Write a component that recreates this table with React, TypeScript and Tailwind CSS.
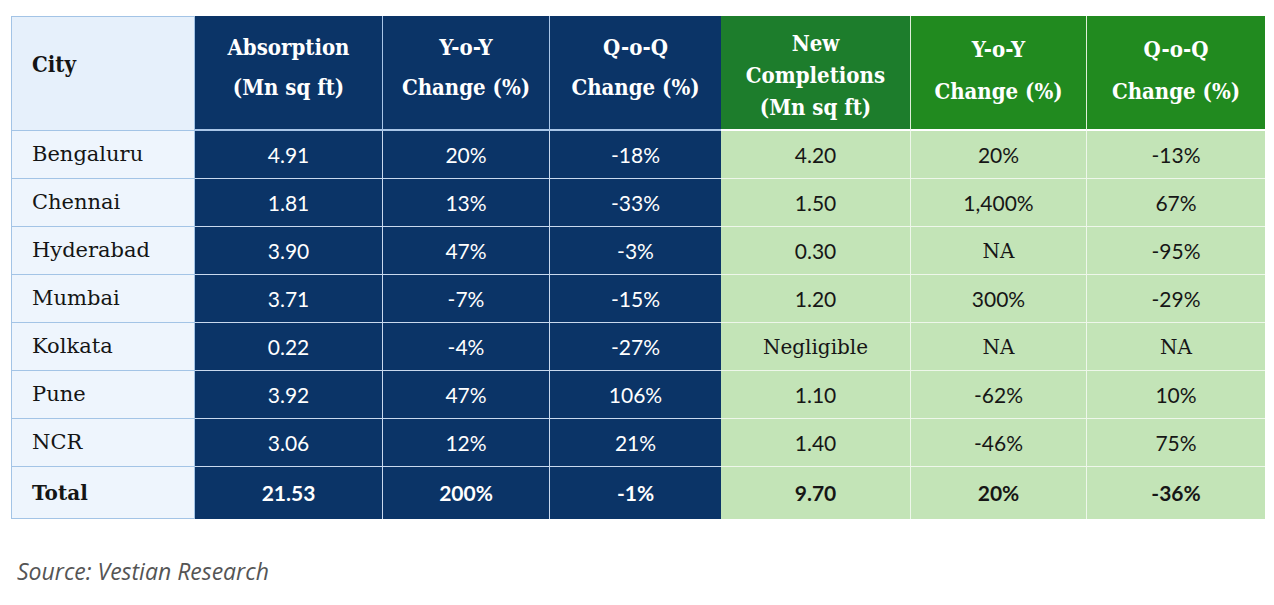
import React from "react";

type Row = { city: string; a: string[]; g: string[]; total?: boolean };

const rows: Row[] = [
  { city: "Bengaluru", a: ["4.91", "20%", "-18%"], g: ["4.20", "20%", "-13%"] },
  { city: "Chennai", a: ["1.81", "13%", "-33%"], g: ["1.50", "1,400%", "67%"] },
  { city: "Hyderabad", a: ["3.90", "47%", "-3%"], g: ["0.30", "NA", "-95%"] },
  { city: "Mumbai", a: ["3.71", "-7%", "-15%"], g: ["1.20", "300%", "-29%"] },
  { city: "Kolkata", a: ["0.22", "-4%", "-27%"], g: ["Negligible", "NA", "NA"] },
  { city: "Pune", a: ["3.92", "47%", "106%"], g: ["1.10", "-62%", "10%"] },
  { city: "NCR", a: ["3.06", "12%", "21%"], g: ["1.40", "-46%", "75%"] },
  { city: "Total", a: ["21.53", "200%", "-1%"], g: ["9.70", "20%", "-36%"], total: true },
];

const isWord = (v: string) => v === "NA" || v === "Negligible";

const headFont =
  "font-['DejaVu_Serif_Condensed','DejaVu_Serif',serif] font-stretch-condensed font-bold text-white text-[22px]";

export default function App() {
  return (
    <div className="w-[1274px] h-[605px] bg-white pl-[11px] pt-[16px]">
      <div className="grid grid-cols-[184px_188px_167px_171px_190px_176px_178px] w-[1254px]">
        {/* header */}
        <div className="h-[115px] bg-[#e6f0fb] border border-[#a3c4e6] flex items-center pl-[20px] pb-[18px] text-[22px] font-bold text-[#141414] font-['DejaVu_Serif_Condensed','DejaVu_Serif',serif] font-stretch-condensed">
          City
        </div>
        {["Absorption|(Mn sq ft)", "Y-o-Y|Change (%)", "Q-o-Q|Change (%)"].map((h, i) => (
          <div
            key={h}
            className={`h-[115px] bg-[#0b3467] border-b-[2px] border-b-[#a9c6e8] ${i < 2 ? "border-r border-r-[#a9c6e8]" : ""} flex flex-col items-center justify-center pb-[12px] leading-[40px] ${headFont}`}
          >
            {h.split("|").map((l) => (
              <span key={l}>{l}</span>
            ))}
          </div>
        ))}
        <div
          className={`h-[115px] bg-[#1d7d2c] border-b-[2px] border-b-white border-r-[1.5px] border-r-[#e0efd8] flex flex-col items-center justify-center pt-[4px] leading-[32px] ${headFont}`}
        >
          <span>New</span>
          <span>Completions</span>
          <span>(Mn sq ft)</span>
        </div>
        {["Y-o-Y|Change (%)", "Q-o-Q|Change (%)"].map((h, i) => (
          <div
            key={h + "g"}
            className={`h-[115px] bg-[#218a1f] border-b-[2px] border-b-white ${i === 0 ? "border-r-[1.5px] border-r-[#e0efd8]" : ""} flex flex-col items-center justify-center pb-[5px] leading-[42px] ${headFont}`}
          >
            {h.split("|").map((l) => (
              <span key={l}>{l}</span>
            ))}
          </div>
        ))}

        {/* body */}
        {rows.map((r, ri) => {
          const last = ri === rows.length - 1;
          const h = r.total ? "h-[52px]" : "h-[48px]";
          const weight = r.total ? "font-bold" : "font-normal";
          return (
            <React.Fragment key={r.city}>
              <div
                className={`${h} bg-[#eef5fd] border-x border-x-[#a3c4e6] ${last ? "border-b" : "border-b-[1.5px]"} border-b-[#a3c4e6] flex items-center pl-[20px] text-[#151515] font-['DejaVu_Serif',serif] ${r.total ? "text-[20px] font-bold" : "text-[21px]"}`}
              >
                {r.city}
              </div>
              {r.a.map((v, i) => (
                <div
                  key={"a" + i}
                  className={`${h} bg-[#0b3467] ${last ? "" : "border-b-[1.5px] border-b-[#c9d9ee]"} ${i < 2 ? "border-r-[1.5px] border-r-[#c9d9ee]" : ""} flex items-center justify-center text-white text-[21px] font-['Lato','Liberation_Sans',sans-serif] ${weight}`}
                >
                  {v}
                </div>
              ))}
              {r.g.map((v, i) => (
                <div
                  key={"g" + i}
                  className={`${h} bg-[#c3e4b7] ${last ? "" : "border-b-[1.5px] border-b-[#eef7ea]"} ${i < 2 ? "border-r-[1.5px] border-r-[#eef7ea]" : ""} flex items-center justify-center text-[#161616] ${weight} ${
                    isWord(v)
                      ? "text-[20px] font-['DejaVu_Serif',serif]"
                      : "text-[21px] font-['Lato','Liberation_Sans',sans-serif]"
                  }`}
                >
                  {v}
                </div>
              ))}
            </React.Fragment>
          );
        })}
      </div>
      <div className="mt-[37px] pl-[6px] text-[23px] italic text-[#555555] leading-[30px] font-['Open_Sans','Lato',sans-serif]">
        Source: Vestian Research
      </div>
    </div>
  );
}
